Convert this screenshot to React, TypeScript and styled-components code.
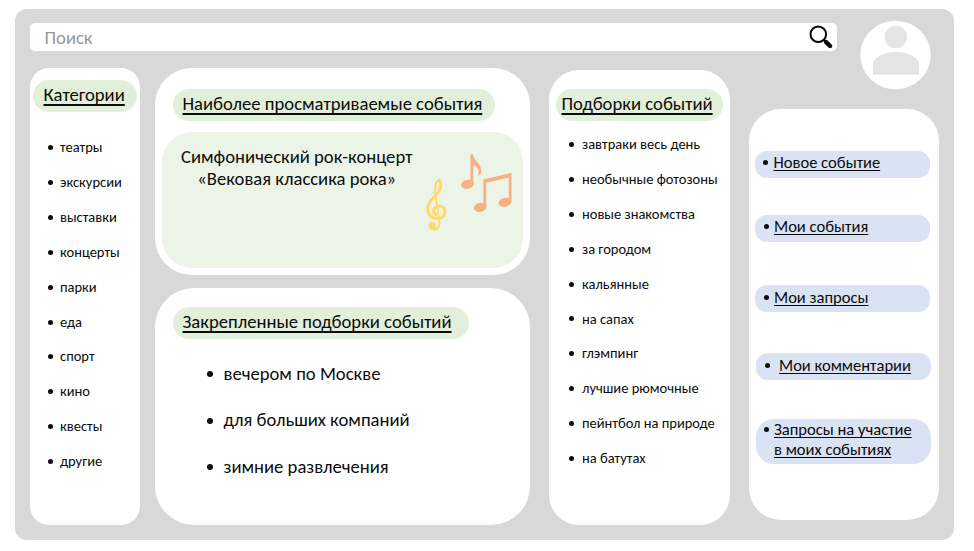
import React from 'react';
import styled, { createGlobalStyle } from 'styled-components';

const GlobalStyle = createGlobalStyle`
  *, *::before, *::after { box-sizing: border-box; }
  body {
    margin: 0;
    background: #fff;
    color: #0c0c0c;
    font-family: Carlito, Calibri, Lato, sans-serif;
    overflow: hidden;
  }
  ul, h2, p { margin: 0; padding: 0; font-weight: 400; }
`;

const Page = styled.div`
  width: 974px;
  height: 551px;
  padding: 9px 20px 11px 15px;
`;

const Frame = styled.div`
  height: 531px;
  padding: 14px 15px 15px;
  border-radius: 12px;
  background: #d8d8d8;
`;

const Header = styled.header`
  display: flex;
  height: 45px;
  gap: 23px;
`;

const Search = styled.label`
  display: flex;
  align-items: center;
  justify-content: space-between;
  width: 807px;
  height: 28px;
  padding: 0 3.5px 0 14.5px;
  border-radius: 5px;
  background: #fff;
`;

const SearchInput = styled.input`
  flex: 1;
  border: 0;
  outline: 0;
  padding: 1px 0 0;
  background: none;
  font: 18.65px/24px Carlito, Calibri, Lato, sans-serif;
  &::placeholder { color: #979797; opacity: 1; }
`;

const Avatar = styled.svg`
  flex: none;
  width: 71px;
  height: 70px;
  margin-top: -3px;
`;

const Columns = styled.main`
  display: flex;
  align-items: flex-start;
`;

const Card = styled.section<{ $w: number; $h: number; $r: number }>`
  width: ${p => p.$w}px;
  height: ${p => p.$h}px;
  border-radius: ${p => p.$r}px;
  background: #fff;
`;

const CategoriesCard = styled(Card)`
  margin-right: 15px;
  padding: 12px 3px 0;
`;

const Center = styled.div`
  display: flex;
  flex-direction: column;
  gap: 13px;
  margin-right: 19px;
`;

const PopularCard = styled(Card)`
  padding: 21px 7px 0;
`;

const PinnedCard = styled(Card)`
  padding: 19px 18px 0;
`;

const CollectionsCard = styled(Card)`
  margin: 2px 19px 0 0;
  padding: 19px 7px 0;
`;

const MenuCard = styled(Card)`
  margin-top: 41px;
  padding: 42px 6px 0;
`;

const Title = styled.h2<{ $w: number; $pad: number; $indent?: number }>`
  width: ${p => p.$w}px;
  height: 32px;
  margin-left: ${p => p.$indent ?? 0}px;
  padding-left: ${p => p.$pad}px;
  border-radius: 16px;
  background: #e2efda;
  font-size: 18.65px;
  line-height: 30px;
  white-space: nowrap;
  text-decoration: underline;
  text-decoration-thickness: 1.6px;
  text-underline-offset: 3px;
  text-decoration-skip-ink: none;
`;

const Featured = styled.div`
  display: flex;
  justify-content: space-between;
  height: 136px;
  margin-top: 11px;
  padding: 14px 11px 0 19px;
  border-radius: 30px;
  background: #ebf4e7;
`;

const FeaturedText = styled.p`
  font-size: 18.65px;
  line-height: 22.3px;
  text-align: center;
  white-space: nowrap;
`;

const Music = styled.svg`
  width: 92px;
  height: 82px;
  margin-top: 6px;
`;

const List = styled.ul<{ $top: number; $left: number; $size: number; $row: number }>`
  padding: ${p => p.$top}px 0 0 ${p => p.$left}px;
  list-style: none;
  font-size: ${p => p.$size}px;
  line-height: ${p => p.$row}px;
  white-space: nowrap;
`;

const Item = styled.li<{ $gap: number; $dot: number }>`
  display: flex;
  align-items: center;
  gap: ${p => p.$gap}px;
  &::before {
    content: '';
    flex: none;
    width: ${p => p.$dot}px;
    height: ${p => p.$dot}px;
    border-radius: 50%;
    background: #0c0c0c;
  }
`;

const MenuItem = styled.a<{ $h: number; $mt: number; $x?: number; $gap: number; $dotX: number; $top?: number }>`
  display: flex;
  align-items: flex-start;
  gap: ${p => p.$gap}px;
  width: 175px;
  height: ${p => p.$h}px;
  margin: ${p => p.$mt}px 0 0 ${p => p.$x ?? 0}px;
  padding: ${p => p.$top ?? 1}px 0 0 ${p => p.$dotX}px;
  border-radius: ${p => (p.$h > 30 ? 18 : 12)}px;
  background: #dae3f3;
  font-size: 16.55px;
  line-height: 20px;
  white-space: pre-line;
  &::before {
    content: '';
    flex: none;
    width: 5.5px;
    height: 5.5px;
    margin-top: 7.5px;
    border-radius: 50%;
    background: #0c0c0c;
  }
`;

const MenuLabel = styled.span`
  text-decoration: underline;
  text-decoration-thickness: 1px;
  text-underline-offset: 2px;
  text-decoration-skip-ink: none;
`;

const categories = ['театры', 'экскурсии', 'выставки', 'концерты', 'парки', 'еда', 'спорт', 'кино', 'квесты', 'другие'];
const collections = ['завтраки весь день', 'необычные фотозоны', 'новые знакомства', 'за городом', 'кальянные', 'на сапах', 'глэмпинг', 'лучшие рюмочные', 'пейнтбол на природе', 'на батутах'];
const pinned = ['вечером по Москве', 'для больших компаний', 'зимние развлечения'];
const menu = [
  { label: 'Новое событие', h: 27, mt: 0, dotX: 7.5, gap: 5.5 },
  { label: 'Мои события', h: 27, mt: 37, dotX: 8.5, gap: 5 },
  { label: 'Мои запросы', h: 27, mt: 43, dotX: 8.5, gap: 5, top: 2 },
  { label: 'Мои комментарии', h: 27, mt: 41, dotX: 9, gap: 9, x: 0.5, top: 2 },
  { label: 'Запросы на участие\nв моих событиях', h: 45, mt: 39, dotX: 7.5, gap: 5, x: 1, top: 0 },
];

const SearchIcon = () => (
  <svg width="26" height="26" viewBox="0 0 26 26" fill="none" stroke="#050505">
    <circle cx="10.3" cy="10.2" r="7.8" strokeWidth="2" />
    <path d="M15.9 15.9l2.6 2.6" strokeWidth="2.2" />
    <path d="M18.100 18.200l4 3.800" strokeWidth="4.400" strokeLinecap="round" />
  </svg>
);

export default function App() {
  return (
    <>
      <GlobalStyle />
      <Page>
        <Frame>
          <Header>
            <Search>
              <SearchInput placeholder="Поиск" />
              <SearchIcon />
            </Search>
            <Avatar viewBox="0 0 71 70">
              <ellipse cx="35.5" cy="35" rx="35.2" ry="34.3" fill="#fff" />
              <circle cx="35.8" cy="17" r="11.2" fill="#e4e4e4" />
              <path d="M13 54.500V44c0-6 11-12 23-12s23 6 23 12v10.500z" fill="#e4e4e4" />
            </Avatar>
          </Header>
          <Columns>
            <CategoriesCard $w={110} $h={457} $r={19}>
              <Title $w={104} $pad={10.5}>Категории</Title>
              <List $top={18.4} $left={14.5} $size={14.5} $row={34.85}>
                {categories.map(c => <Item key={c} $gap={7.5} $dot={5}>{c}</Item>)}
              </List>
            </CategoriesCard>
            <Center>
              <PopularCard $w={375} $h={206.5} $r={37}>
                <Title $w={322} $pad={9.5} $indent={11}>Наиболее просматриваемые события</Title>
                <Featured>
                  <FeaturedText>Симфонический рок-концерт<br />«Вековая классика рока»</FeaturedText>
                  <Music viewBox="0 0 92 82">
                    <g fill="none" stroke="#ffd966" strokeLinecap="round">
                      <path d="M17.300 76.500c2-1.600 2.400-3.700 2-7.500L15.300 40c-1-6.500.6-10 3.200-11.800" strokeWidth="1.800" />
                      <path d="M19 28c2.800 2 2.400 6.600.3 10.400C15.700 45 7.600 49 7.600 56.700c0 6.300 4.300 9.900 9.500 9.900 4.700 0 7.900-2.900 7.900-6.900 0-3.600-2.700-5.600-5.500-5.600-3.300 0-5.800 2.300-5.800 4.800 0 2.100 1.100 3.500 2.700 4.200" strokeWidth="2.900" />
                      <path d="M19.500 33c-2 4-6 7-9 10.500" strokeWidth="0.800" />
                      <path d="M10.800 76c1.600 1.900 4.800 2 6.700.5" strokeWidth="1.800" />
                    </g>
                    <circle cx="12.300" cy="73.700" r="3.700" fill="#ffd966" />
                    <g fill="#f4b183">
                      <ellipse cx="47.500" cy="32.300" rx="6.500" ry="4.500" transform="rotate(-12 47.500 32.300)" />
                      <path d="M50.500 3.500q0-1.500 1.400-1.500t1.400 1.500c.7 5 7.500 8 8 14.500.2 3-1 5.500-3 5.500 1.500-6-1-9-5-10.500V32h-2.800z" />
                      <ellipse cx="60.200" cy="55.300" rx="6.400" ry="4.500" transform="rotate(-12 60.200 55.300)" />
                      <ellipse cx="85" cy="50.300" rx="6.500" ry="4.500" transform="rotate(-12 85 50.300)" />
                      <path d="M63.400 27.500L91.500 21v29h-2.700V25.500L66.200 30.800V55h-2.800z" />
                    </g>
                  </Music>
                </Featured>
              </PopularCard>
              <PinnedCard $w={375} $h={237.5} $r={39}>
                <Title $w={296} $pad={9.5}>Закрепленные подборки событий</Title>
                <List $top={12.4} $left={34} $size={18.65} $row={46.6}>
                  {pinned.map(c => <Item key={c} $gap={10.5} $dot={6}>{c}</Item>)}
                </List>
              </PinnedCard>
            </Center>
            <CollectionsCard $w={181} $h={455} $r={30}>
              <Title $w={167} $pad={5.5}>Подборки событий</Title>
              <List $top={6.3} $left={13} $size={14.5} $row={34.85}>
                {collections.map(c => <Item key={c} $gap={8} $dot={5}>{c}</Item>)}
              </List>
            </CollectionsCard>
            <MenuCard $w={190} $h={411} $r={32}>
              {menu.map(m => (
                <MenuItem key={m.label} $h={m.h} $mt={m.mt} $x={m.x} $gap={m.gap} $dotX={m.dotX} $top={m.top}>
                  <MenuLabel>{m.label}</MenuLabel>
                </MenuItem>
              ))}
            </MenuCard>
          </Columns>
        </Frame>
      </Page>
    </>
  );
}
